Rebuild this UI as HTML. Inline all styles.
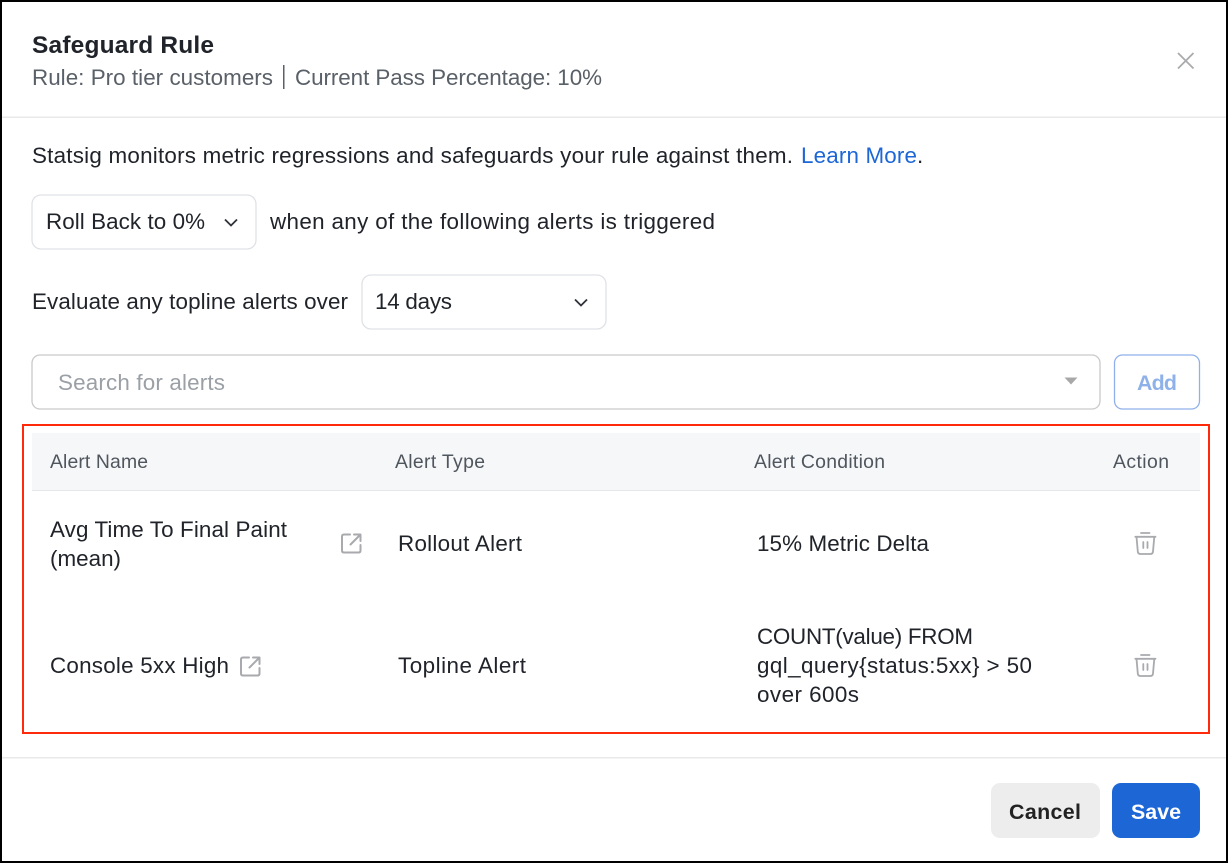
<!DOCTYPE html>
<html>
<head>
<meta charset="utf-8">
<title>Safeguard Rule</title>
<style>
html,body{margin:0;padding:0;background:#fff;width:1228px;height:864px;overflow:hidden}
svg{display:block}
text{font-family:"Liberation Sans",sans-serif;font-size:22.4px;fill:#20242a}
.b{font-weight:bold;font-size:21.4px}
.g{fill:#5a6068}
.h{font-size:19.4px;fill:#50565e}
</style>
</head>
<body>
<svg width="1228" height="864" viewBox="0 0 1228 864" xmlns="http://www.w3.org/2000/svg">
<defs>
<g id="ext" fill="none" stroke="#a8aaad" stroke-width="2" stroke-linecap="round" stroke-linejoin="round">
<path d="M9 1.500H3Q1 1.500 1 3.500V17.500Q1 19.500 3 19.500H17.500Q19.500 19.500 19.500 17.500V12"/>
<path d="M13 1.500H19.500V8M19 2L9.500 11.500"/>
</g>
<g id="trash" fill="none" stroke="#a8aaad" stroke-width="1.800" stroke-linecap="round" stroke-linejoin="round">
<path d="M6.500 1H15"/>
<path d="M0.800 4.800H21"/>
<path d="M2 4.800L3.300 19.500Q3.500 22 6 22H15.800Q18.300 22 18.500 19.500L19.800 4.800"/>
<path d="M8.800 10V16M13 10V16"/>
</g>
</defs>

<rect x="1" y="1" width="1226" height="861" fill="#fff" stroke="#000" stroke-width="2"/>

<text class="b" x="32" y="53" style="font-size:24.5px" textLength="182" lengthAdjust="spacing">Safeguard Rule</text>
<text class="g" x="32" y="85" textLength="241" lengthAdjust="spacing">Rule: Pro tier customers</text>
<rect x="283" y="65" width="1.500" height="24" fill="#5a6068"/>
<text class="g" x="295" y="85" textLength="307" lengthAdjust="spacing">Current Pass Percentage: 10%</text>
<path d="M1178 53L1193.500 68.500M1193.500 53L1178 68.500" stroke="#a9abad" stroke-width="1.800" fill="none"/>
<rect x="2" y="116.500" width="1224" height="1.500" fill="#e8e9eb"/>

<text x="32" y="163" textLength="761" lengthAdjust="spacing">Statsig monitors metric regressions and safeguards your rule against them.</text>
<text x="801" y="163" style="fill:#1c66d6" textLength="116" lengthAdjust="spacing">Learn More</text>
<text x="917" y="163">.</text>

<rect x="32" y="195" width="224" height="54" rx="9" fill="#fff" stroke="#e0e2e6" stroke-width="1.300"/>
<text x="46" y="229" textLength="159" lengthAdjust="spacing">Roll Back to 0%</text>
<path d="M225 219.500L231 225.500L237 219.500" fill="none" stroke="#30343a" stroke-width="1.800"/>
<text x="270" y="229" textLength="445" lengthAdjust="spacing">when any of the following alerts is triggered</text>

<text x="32" y="309" textLength="316" lengthAdjust="spacing">Evaluate any topline alerts over</text>
<rect x="362" y="275" width="244" height="54" rx="9" fill="#fff" stroke="#e0e2e6" stroke-width="1.300"/>
<text x="375" y="309" textLength="77" lengthAdjust="spacing">14 days</text>
<path d="M575 299.500L581 305.500L587 299.500" fill="none" stroke="#30343a" stroke-width="1.800"/>

<rect x="32" y="355" width="1068" height="54" rx="8" fill="#fff" stroke="#c9c9c9" stroke-width="1.300"/>
<text x="58" y="390" style="fill:#9ba0a6" textLength="167" lengthAdjust="spacing">Search for alerts</text>
<path d="M1064.500 377.500H1077.500L1071 384.500Z" fill="#a8a8a8"/>
<rect x="1114.500" y="355" width="85" height="54" rx="8" fill="#fff" stroke="#8fb1ea" stroke-width="1.300"/>
<text class="b" x="1137" y="390" style="fill:#8fb1ea" textLength="40" lengthAdjust="spacing">Add</text>

<rect x="23" y="425" width="1186" height="308" fill="none" stroke="#ff2a0a" stroke-width="2"/>

<rect x="32" y="433" width="1168" height="57" fill="#f6f7f9"/>
<rect x="32" y="490" width="1168" height="1" fill="#e6e7ea"/>
<text class="h" x="50" y="468" textLength="98" lengthAdjust="spacing">Alert Name</text>
<text class="h" x="395" y="468" textLength="90" lengthAdjust="spacing">Alert Type</text>
<text class="h" x="754" y="468" textLength="131" lengthAdjust="spacing">Alert Condition</text>
<text class="h" x="1113" y="468" textLength="56" lengthAdjust="spacing">Action</text>

<text x="50" y="537" textLength="237" lengthAdjust="spacing">Avg Time To Final Paint</text>
<text x="50" y="566" textLength="71" lengthAdjust="spacing">(mean)</text>
<use href="#ext" x="341" y="533"/>
<text x="398" y="551" textLength="124" lengthAdjust="spacing">Rollout Alert</text>
<text x="757" y="551" textLength="172" lengthAdjust="spacing">15% Metric Delta</text>
<use href="#trash" x="1134.500" y="532"/>

<text x="50" y="673" textLength="179" lengthAdjust="spacing">Console 5xx High</text>
<use href="#ext" x="240" y="656"/>
<text x="398" y="673" textLength="128" lengthAdjust="spacing">Topline Alert</text>
<text x="757" y="644" textLength="216" lengthAdjust="spacing">COUNT(value) FROM</text>
<text x="757" y="673" textLength="275" lengthAdjust="spacing">gql_query{status:5xx} &gt; 50</text>
<text x="757" y="702" textLength="102" lengthAdjust="spacing">over 600s</text>
<use href="#trash" x="1134.500" y="654"/>

<rect x="2" y="757" width="1224" height="1.500" fill="#e8e9eb"/>

<rect x="991" y="783" width="109" height="55" rx="9" fill="#ededed"/>
<text class="b" x="1009" y="819" style="fill:#222" textLength="72" lengthAdjust="spacing">Cancel</text>
<rect x="1112" y="783" width="88" height="55" rx="9" fill="#1c66d6"/>
<text class="b" x="1131" y="819" style="fill:#fff" textLength="50" lengthAdjust="spacing">Save</text>
</svg>
</body>
</html>
